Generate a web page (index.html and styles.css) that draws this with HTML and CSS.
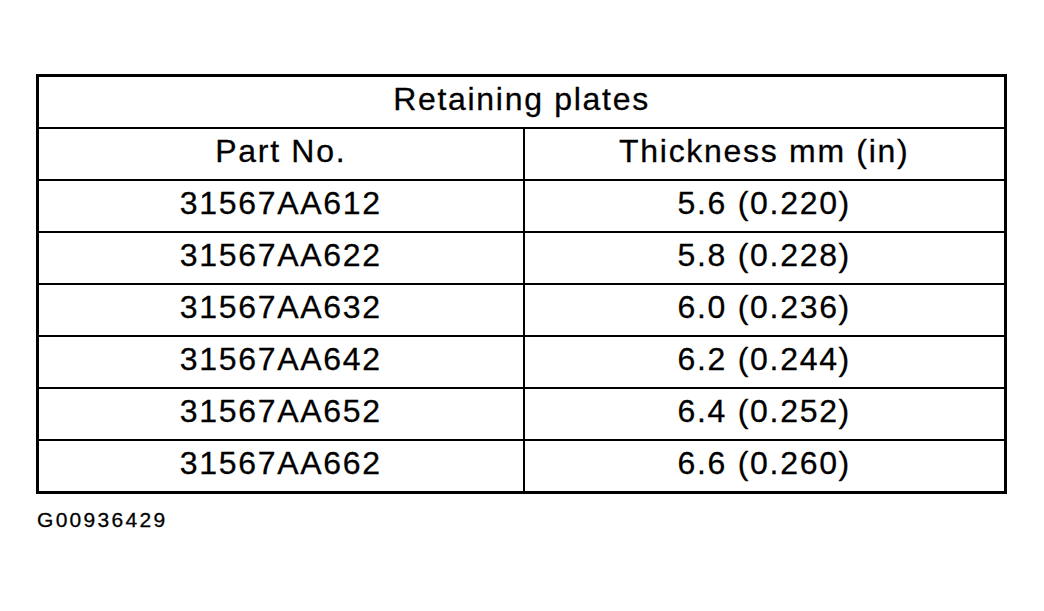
FILE: index.html
```html
<!DOCTYPE html>
<html lang="en">
    <head>
        <title>Retaining plates</title>
        <link rel="stylesheet" href="styles.css">
    </head>
    <body>
        <div id="main">
            <table class="plates">
                <colgroup>
                    <col class="col-part">
                    <col class="col-thick">
                </colgroup>
                <tr>
                    <td class="title" colspan="2">Retaining plates</td>
                </tr>
                <tr>
                    <td>Part No.</td>
                    <td>Thickness mm (in)</td>
                </tr>
                <tr><td>31567AA612</td><td>5.6 (0.220)</td></tr>
                <tr><td>31567AA622</td><td>5.8 (0.228)</td></tr>
                <tr><td>31567AA632</td><td>6.0 (0.236)</td></tr>
                <tr><td>31567AA642</td><td>6.2 (0.244)</td></tr>
                <tr><td>31567AA652</td><td>6.4 (0.252)</td></tr>
                <tr><td>31567AA662</td><td>6.6 (0.260)</td></tr>
            </table>
            <div class="figure-id">G00936429</div>
        </div>
    </body>
</html>
```

FILE: styles.css
```css
*{
    margin: 0px;
    padding: 0px;
}
body{
    background-color: white;
    color: black;
    font-family: "Liberation Sans", Arial, sans-serif;
}
#main{
    padding-top: 74px;
    padding-left: 36px;
}
.plates{
    border-collapse: collapse;
    border: 3px solid black;
    width: 971px;
    table-layout: fixed;
}
.plates td{
    border: 2px solid black;
    height: 45px;
    text-align: center;
    vertical-align: middle;
    font-size: 32px;
    letter-spacing: 1.7px;
    padding-bottom: 5px;
    -webkit-text-stroke: 0.3px black;
}
.col-part{
    width: 486px;
}
.figure-id{
    margin-top: 14px;
    margin-left: 1px;
    font-size: 21px;
    letter-spacing: 2.3px;
    -webkit-text-stroke: 0.3px black;
}
```
